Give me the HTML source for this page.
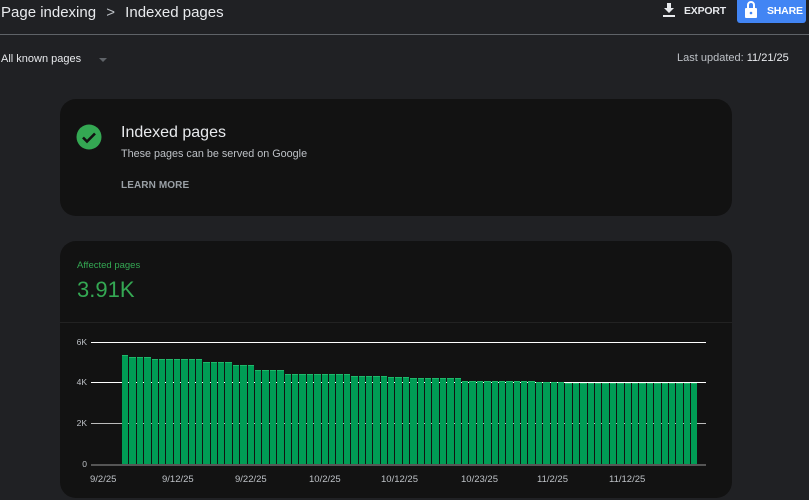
<!DOCTYPE html>
<html><head><style>
*{margin:0;padding:0;box-sizing:border-box}
body{width:809px;height:500px;overflow:hidden;background:#202124;font-family:"Liberation Sans",Arial,sans-serif;position:relative;color:#e8eaed}
.a{position:absolute}
.card{position:absolute;left:60px;width:672px;background:#121212;border-radius:16px}
.bars{position:absolute;left:122px;top:300px;width:576px;height:164px;display:flex;align-items:flex-end}
.bars div{flex:1;background:#009c55;margin-right:1px;border-top:1px solid #1fb76a}
.gl{position:absolute;left:91px;width:615px;height:1px}
.yl{position:absolute;font-size:8.5px;color:#bdc1c6;width:27px;text-align:right;left:60px}
.xl{position:absolute;top:474px;font-size:9.5px;color:#bdc1c6}
</style></head><body>
<div class="a" style="left:1px;top:4px;font-size:15px;color:#e8eaed">Page indexing <span style="margin:0 6px;color:#bdc1c6">&gt;</span> Indexed pages</div>
<svg class="a" style="left:663px;top:3px" width="12" height="14" viewBox="0 0 12 14"><path d="M4 0h4v5h3L6 10 1 5h3z M0 12h12v2H0z" fill="#e8eaed"/></svg>
<div class="a" style="left:684px;top:5px;font-size:10.5px;font-weight:bold;color:#e8eaed;letter-spacing:-.2px">EXPORT</div>
<div class="a" style="left:737px;top:0;width:69px;height:23px;background:#4285f4;border-radius:0 0 3px 3px"></div>
<svg class="a" style="left:745px;top:1px" width="12" height="17" viewBox="0 0 12 17"><path d="M3 7V4a3 3 0 0 1 6 0v3" stroke="#fff" stroke-width="2" fill="none"/><rect x="0" y="7" width="12" height="10" rx="1" fill="#fff"/><circle cx="6" cy="12" r="1.3" fill="#4285f4"/></svg>
<div class="a" style="left:767px;top:5px;font-size:10.5px;font-weight:bold;color:#fff;letter-spacing:-.2px">SHARE</div>
<div class="a" style="left:0;top:34px;width:809px;height:1px;background:#5f6368"></div>
<div class="a" style="left:1px;top:53px;font-size:11px;color:#e8eaed">All known pages</div>
<div class="a" style="left:99px;top:58px;width:0;height:0;border-left:4px solid transparent;border-right:4px solid transparent;border-top:4px solid #5f6368"></div>
<div class="a" style="left:677px;top:52px;font-size:11px;color:#bdc1c6">Last updated: <span style="color:#e8eaed">11/21/25</span></div>

<div class="card" style="top:99px;height:117px">
<svg class="a" style="left:16px;top:25px" width="26" height="26" viewBox="0 0 26 26"><circle cx="13" cy="13" r="12.5" fill="#34a853"/><path d="M7 13.5l4 4 8-8" stroke="#121212" stroke-width="2.6" fill="none"/></svg>
<div class="a" style="left:61px;top:25px;font-size:16px;color:#e8eaed">Indexed pages</div>
<div class="a" style="left:61px;top:49px;font-size:10.8px;color:#bdc1c6">These pages can be served on Google</div>
<div class="a" style="left:61px;top:81px;font-size:10px;font-weight:bold;color:#9aa0a6;letter-spacing:.1px">LEARN MORE</div>
</div>

<div class="card" style="top:241px;height:257px">
<div class="a" style="left:17px;top:19px;font-size:9.5px;color:#34a853">Affected pages</div>
<div class="a" style="left:17px;top:36px;font-size:22px;color:#34a853">3.91K</div>
<div class="a" style="left:0;top:81px;width:672px;height:1px;background:#222"></div>
</div>

<div class="gl" style="top:342px;background:#fff"></div>
<div class="gl" style="top:382px;background:#fff"></div>
<div class="gl" style="top:423px;background:#bbb"></div>
<div class="gl" style="top:464px;background:#555;height:2px"></div>
<div class="yl" style="top:337px">6K</div>
<div class="yl" style="top:377px">4K</div>
<div class="yl" style="top:418px">2K</div>
<div class="yl" style="top:459px">0</div>

<div class="bars">
<div style="height:109px"></div><div style="height:107px"></div><div style="height:107px"></div><div style="height:107px"></div>
<div style="height:105px"></div><div style="height:105px"></div><div style="height:105px"></div><div style="height:105px"></div><div style="height:105px"></div><div style="height:105px"></div><div style="height:105px"></div>
<div style="height:102px"></div><div style="height:102px"></div><div style="height:102px"></div><div style="height:102px"></div>
<div style="height:99px"></div><div style="height:99px"></div><div style="height:99px"></div>
<div style="height:94px"></div><div style="height:94px"></div><div style="height:94px"></div><div style="height:94px"></div>
<div style="height:90px"></div><div style="height:90px"></div><div style="height:90px"></div><div style="height:90px"></div><div style="height:90px"></div><div style="height:90px"></div><div style="height:90px"></div><div style="height:90px"></div><div style="height:90px"></div>
<div style="height:88px"></div><div style="height:88px"></div><div style="height:88px"></div><div style="height:88px"></div><div style="height:88px"></div>
<div style="height:87px"></div><div style="height:87px"></div><div style="height:87px"></div>
<div style="height:86px"></div><div style="height:86px"></div><div style="height:86px"></div><div style="height:86px"></div><div style="height:86px"></div><div style="height:86px"></div><div style="height:86px"></div>
<div style="height:83px"></div><div style="height:83px"></div><div style="height:83px"></div><div style="height:83px"></div><div style="height:83px"></div><div style="height:83px"></div><div style="height:83px"></div><div style="height:83px"></div><div style="height:83px"></div><div style="height:83px"></div>
<div style="height:82px"></div><div style="height:82px"></div><div style="height:82px"></div><div style="height:82px"></div>
<div style="height:81px"></div><div style="height:81px"></div><div style="height:81px"></div><div style="height:81px"></div><div style="height:81px"></div><div style="height:81px"></div><div style="height:81px"></div><div style="height:81px"></div><div style="height:81px"></div><div style="height:81px"></div><div style="height:81px"></div><div style="height:81px"></div><div style="height:81px"></div><div style="height:81px"></div><div style="height:81px"></div><div style="height:81px"></div><div style="height:81px"></div><div style="height:81px"></div>
</div>

<div class="xl" style="left:90px">9/2/25</div>
<div class="xl" style="left:162px">9/12/25</div>
<div class="xl" style="left:235px">9/22/25</div>
<div class="xl" style="left:309px">10/2/25</div>
<div class="xl" style="left:381px">10/12/25</div>
<div class="xl" style="left:461px">10/23/25</div>
<div class="xl" style="left:537px">11/2/25</div>
<div class="xl" style="left:609px">11/12/25</div>
</body></html>
